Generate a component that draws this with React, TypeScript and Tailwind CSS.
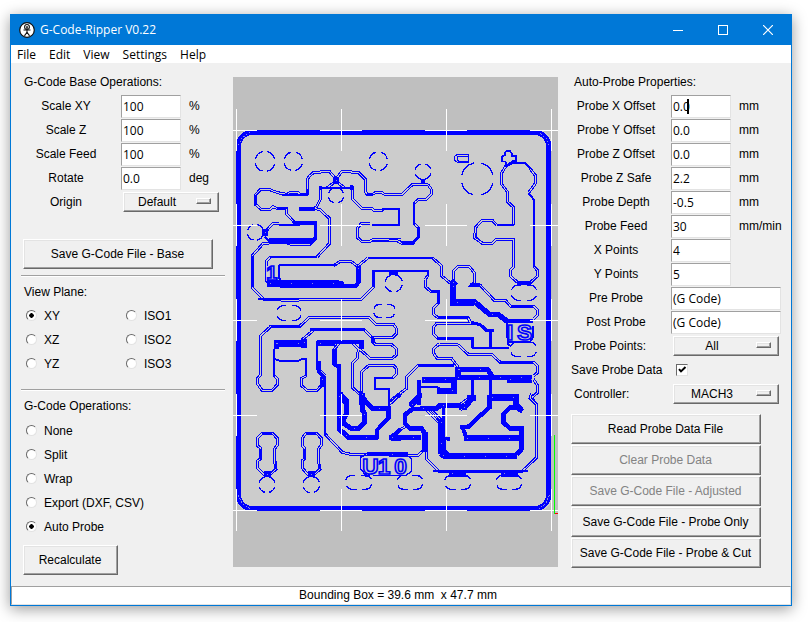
import { useId, type ReactNode } from "react";

type Trace = [width: number, d: string];
type Pad = [cx: number, cy: number, w: number, h: number];
type Tile = { x: number; y: number; pairs: string[]; traces: Trace[]; pads: Pad[] };

/* The board is drawn in six sections. "pairs" are twin isolation passes,
   "traces" are solid cuts with their own width, "pads" are dashed outlines. */
const tiles: Tile[] = [
  {
    x: -9,
    y: -9,
    pairs: [
      "M231 362V318L237 308L251 295H270L275 291H297L318 315L337 291H360L366 295H385L405 315V350L412 362L430 360L438 355H455L462 360H512",
      "M231 362H210L203 355H180L173 361L155 359L125 350L120 346H92L75 364V390L95 407H120L128 398L140 403H170V420L195 447H210",
      "M366 335V373L395 403H425L430 408H457L462 406",
      "M270 335V378L260 398L253 403L270 407L297 432V512",
      "M512 500H425L415 503H397L382 490V462L395 448H420",
      "M105 475L128 449H147",
      "M290 342L318 322L345 342",
    ],
    traces: [
      [6, "M155 362H232V345"], [6, "M412 362H430"],
      [6, "M75 364V392"], [6, "M140 403H172"],
      [6, "M457 406H508V453H425"],
      [6, "M272 342H364"], [10, "M208 405H256"],
      [18, "M309 318H327"], [16, "M97 475H113"],
      [6, "M147 452H210"], [7, "M190 447H256V490L248 498H210"],
      [12, "M118 498H210"], [6, "M105 488L122 508H240L254 498"],
      [6, "M272 335V347"], [7, "M364 333V347"],
    ],
    pads: [[105, 262, 60, 60], [190, 262, 56, 56], [445, 262, 56, 56], [318, 364, 46, 46], [76, 475, 48, 48]],
  },
  {
    x: 471,
    y: -9,
    pairs: [
      "M-2 361H36L68 331H100L115 333L123 345V362L108 377H85L72 388",
      "M-2 495H22L35 506H68L84 490V460L72 448",
      "M350 272L333 300V328L351 352V382L371 400V452",
      "M320 453L306 438H277L257 460V490L277 508H306L320 496H371V512",
      "M420 284L435 303V330L416 356",
    ],
    traces: [
      [6, "M72 385V452"], [6, "M84 460V490L68 507H35"],
      [6, "M-2 405H27V453H-2"],
      [6, "M320 453H372"], [6, "M345 276L360 268H405L422 283"],
      [6, "M415 356L432 378V512"], [9, "M365 264H382"],
      [9, "M92 322H106"],
      [3, "M202 241H236V265H202L193 258V248Z"], [3, "M206 246H236V261H206L201 257V250Z"],
      [5, "M345 236L350 231H360L366 240V246H378V262H364V270L350 277L346 262H335V248L345 243Z"],
    ],
    pads: [[262, 315, 96, 98], [99, 293, 48, 46]],
  },
  {
    x: -9,
    y: 471,
    pairs: [
      "M120 26H170L180 30H240L256 14V-2",
      "M117 28H100L67 65V162L102 196H150L155 199H205L210 196H393L429 160V112",
      "M108 95V82L122 68",
      "M262 68L297 30V-2",
      "M310 95L333 81H362L383 97L413 72",
      "M382 -2V10L395 22H420L430 16H512",
      "M90 425V307L122 278V276H210L238 250H417L437 270H490L500 285V298L487 311H430V325L437 332H485L500 345V362L487 373H420L385 342",
      "M215 318L253 287",
      "M403 287L427 311",
      "M90 425L83 433V450L97 470H125L141 453V433L132 425",
      "M229 425L215 433V455L232 470H260L280 448",
      "M330 325L313 345V380",
      "M365 325L385 345L382 372L367 388V460L388 480L415 512",
      "M393 512V415L418 393H490L500 405V420L488 432",
      "M262 400L285 425",
      "M477 512L512 482",
    ],
    traces: [
      [8, "M147 17H210"], [9, "M118 22H210"], [4, "M240 22L254 8V-2"],
      [6, "M120 68H262"], [6, "M413 72H512"], [6, "M429 160V110H512"],
      [6, "M67 65V160"], [6, "M85 196H205"],
      [5, "M106 88V140L122 152"], [5, "M146 94V130L152 138"], [6, "M146 94H205"], [6, "M205 92H320"],
      [16, "M112 148H322L340 153"], [9, "M150 155H378L388 142"], [12, "M386 95V145"],
      [6, "M122 276H210"], [7, "M240 287H405"],
      [18, "M133 328H230"], [12, "M138 318V345"], [14, "M222 315V342"],
      [6, "M132 345V428"], [6, "M135 375L150 381H205L215 375H229V425"],
      [14, "M278 428V460"], [6, "M262 408V322"], [15, "M262 327H315"], [10, "M315 323H394V345"],
      [8, "M266 382V412L285 432"], [6, "M285 455V512"],
      [10, "M313 345V390L325 398"], [9, "M326 390V512"], [12, "M330 482L350 512"],
      [7, "M428 305V328"], [7, "M393 470V512"],
      [6, "M490 432H435V466H477V512"], [8, "M478 118H505"],
    ],
    pads: [[177, 237, 76, 44], [463, 231, 66, 40], [491, 148, 52, 50]],
  },
  {
    x: 471,
    y: 471,
    pairs: [
      "M128 72L154 95V125L182 148",
      "M114 125L105 137V157L123 173H144V208L130 222V240L144 251H234L243 268H140L130 280V300L142 312H248V341",
      "M190 150V112L205 97H237L252 115V147L245 153H270L312 198H345L362 216H430L443 228V243L430 256",
      "M252 -2V10L277 28H306L320 15H371V98L360 110V125L385 147H420L443 125V110L432 98",
      "M-2 20H22L35 28H68L84 10V-2",
      "M140 330H180L205 333L235 361H305L330 384H430L443 397V415L430 427",
      "M150 328L130 345V357L142 374H185L205 400",
      "M-2 502L48 465V430L85 393H192",
      "M290 405L310 430",
      "M430 435L443 455V475L425 492L440 512",
      "M210 512L245 485",
    ],
    traces: [
      [6, "M-2 72H130"], [6, "M-2 110H114V127"], [6, "M123 173H144V210"],
      [6, "M144 251H234"], [6, "M140 312H248V341H357"],
      [17, "M189 148V206H252"], [12, "M184 140L200 154"],
      [13, "M250 200L278 224L300 242H325L352 262"],
      [9, "M346 261H428"], [6, "M350 265V292L356 335"], [6, "M358 323H420L430 308V275"],
      [7, "M243 265L270 272L290 289H312"], [7, "M301 289V341"],
      [6, "M432 -2V98"], [9, "M380 147H422"], [7, "M240 152H270"],
      [6, "M362 216H430"],
      [6, "M330 385H430"], [6, "M85 393H192"],
      [12, "M200 406H292L308 428"], [14, "M195 430H425"], [18, "M352 436H425"], [15, "M205 398V430"],
      [14, "M95 437H192V470H140"], [9, "M88 437V512"], [5, "M92 458H140L150 464"],
      [8, "M247 435V490"], [8, "M301 435V490"], [16, "M292 492H378V512"],
      [16, "M230 492H257"], [12, "M60 512L90 485"],
    ],
    pads: [[402, 176, 78, 46], [400, 346, 80, 44]],
  },
  {
    x: -9,
    y: 951,
    pairs: [
      "M285 120L337 175L362 181H412",
      "M97 117H127L141 132V155L133 165V200L138 225L120 242H102L83 222V200L91 195V162L83 155V132Z",
      "M229 117H259L273 132V155L265 165V200L270 225L252 242H234L217 222V200L223 195V162L217 155V132Z",
      "M475 75L440 110",
      "M477 32L512 -2",
    ],
    traces: [
      [6, "M285 -2V122"], [6, "M97 117H127"], [6, "M229 117H259"],
      [5, "M91 165V195"], [5, "M223 165V195"], [5, "M138 200V225"], [5, "M268 200V225"],
      [15, "M102 241H122"], [15, "M234 241H254"],
      [12, "M327 -2V105L357 131H445"], [12, "M330 -2L349 20V60L341 75V88L365 104H385L404 85V58L397 48V-2"],
      [12, "M392 5L425 42H475V75"], [9, "M475 72L441 108V135"], [5, "M477 -2V42"],
      [13, "M482 132H512"], [10, "M488 130L512 104"],
      [10, "M410 180H512"], [4, "M392 188V225L406 242"], [12, "M404 241H420"],
      [5, "M392 190L408 180"], [4, "M430 244H500"],
    ],
    pads: [[111, 272, 48, 48], [244, 272, 50, 48], [386, 265, 80, 42]],
  },
  {
    x: 471,
    y: 951,
    pairs: [
      "M425 -2L420 12L440 32V190L397 232H147L108 193V115",
      "M112 50L155 95",
      "M118 42L160 85",
      "M298 40L235 98",
      "M210 50L255 8",
      "M-2 130L45 98",
      "M50 183H85L100 170V130",
    ],
    traces: [
      [15, "M297 10H378V30L392 48"], [10, "M298 5V45"], [10, "M210 98H235L298 40"],
      [9, "M216 96L228 128"], [13, "M222 132H397"],
      [11, "M398 52L385 40H360L340 60V85L360 103H395V165L380 182"],
      [16, "M152 178L165 186H380"], [13, "M153 75V180"], [7, "M162 135V170L175 180"],
      [11, "M100 45H68L45 62V88L60 103H95L104 118V175"],
      [13, "M90 43H140L150 35H205L225 40L252 5"], [8, "M160 40V132L180 136"],
      [12, "M62 38L88 8V-2"], [5, "M-2 25L30 -2"],
      [13, "M-2 130H92"], [12, "M-2 180H55"],
      [6, "M128 232H415"], [14, "M178 239H228"], [14, "M333 239H383"],
      [4, "M50 183L64 195V232L48 244H20"],
    ],
    pads: [[60, 265, 78, 42], [203, 265, 80, 42], [357, 265, 78, 42]],
  },
];

const crossXs = [10, 325, 640, 955];
const crossYs = [160, 445, 730, 1015, 1300];

function Board() {
  return (
    <svg viewBox="0 0 975 1470" className="block w-full bg-[#bfbfbf]" shapeRendering="crispEdges" role="img" aria-label="Tool path preview">
      <rect x="10" y="160" width="945" height="1140" rx="36" fill="#cccccc" />
      <rect x="16.5" y="166.5" width="930" height="1128" rx="40" fill="none" stroke="#0000ff" strokeWidth="16" />
      <g fill="none" stroke="#cccccc" strokeWidth="2" strokeDasharray="5 5">
        <path d="M16 205L26 184L50 166M949 205L939 184L918 166M16 1255L26 1278L50 1295M949 1255L939 1278L918 1295" />
      </g>
      {tiles.map((t, i) => (
        <g key={i} transform={`translate(${t.x} ${t.y})`} fill="none">
          {t.pairs.map((d) => <path key={d} d={d} stroke="#0000ff" strokeWidth="9" />)}
          {t.pairs.map((d) => <path key={d} d={d} stroke="#cccccc" strokeWidth="3" />)}
        </g>
      ))}
      {tiles.map((t, i) => (
        <g key={i} transform={`translate(${t.x} ${t.y})`} fill="none" stroke="#0000ff">
          {t.traces.map(([w, d]) => <path key={d} d={d} strokeWidth={w >= 7 ? w + 3 : w} />)}
          {t.traces.filter(([w]) => w >= 12).map(([, d]) => (
            <path key={d} d={d} stroke="#cccccc" strokeWidth="2" strokeDasharray="3 60" strokeDashoffset="-8" />
          ))}
          {t.pads.map(([cx, cy, w, h]) => (
            <rect
              key={`${cx}-${cy}`}
              x={cx - w / 2}
              y={cy - h / 2}
              width={w}
              height={h}
              rx={w === h || w > 90 ? w / 2 : h / 2}
              strokeWidth="4"
              pathLength={100}
              strokeDasharray="17 8"
              strokeDashoffset={w > h + 20 ? 13 : -4}
            />
          ))}
        </g>
      ))}
      <g fill="#cccccc" stroke="#0000ff" strokeWidth="5" fontFamily="Liberation Sans, sans-serif" fontWeight="700" fontSize="68">
        <text x="100" y="608" fontSize="60">1</text>
        <text x="388 434 484" y="1190">U10</text>
        <text x="822 852" y="790">IS</text>
      </g>
      <g stroke="#ffffff" strokeWidth="3">
        {crossYs.map((y) => crossXs.map((x) => <path key={`${x}-${y}`} d={`M${x - 63} ${y}H${x + 63}M${x} ${y - 63}V${y + 63}`} />))}
      </g>
      <path d="M964 1075V1311" stroke="#00ff00" strokeWidth="3" />
      <path d="M966 1309H975" stroke="#ff0000" strokeWidth="3" />
    </svg>
  );
}

const raised =
  "border border-t-white border-l-white border-r-[#696969] border-b-[#696969] bg-[#f0f0f0] shadow-[inset_-1px_-1px_0_#a0a0a0,inset_1px_1px_0_#e3e3e3]";

function PushButton({ children, className = "w-[190px]", disabled }: { children: ReactNode; className?: string; disabled?: boolean }) {
  return (
    <button type="button" disabled={disabled} className={`block h-[30px] whitespace-nowrap pr-px text-center disabled:text-[#838383] ${raised} ${className}`}>
      {children}
    </button>
  );
}

function Entry({ id, value, wide, caret }: { id: string; value: string; wide?: boolean; caret?: boolean }) {
  return (
    <span className="relative block">
      <input
        id={id}
        defaultValue={value}
        className={`block h-[23px] rounded-none border border-t-[#a0a0a0] border-l-[#a0a0a0] border-r-[#e3e3e3] border-b-[#e3e3e3] bg-white px-px font-['Open_Sans','Noto_Sans',sans-serif] text-[12px] text-black outline-none ${wide ? "w-[110px]" : "w-[60px]"}`}
      />
      {caret && <span className="absolute left-4 top-1 h-[15px] w-0.5 bg-black" />}
    </span>
  );
}

function Field({ label, value, unit, wide, caret }: { label: string; value: string; unit?: string; wide?: boolean; caret?: boolean }) {
  const id = useId();
  return (
    <div className="flex h-6 items-center">
      <label htmlFor={id} className="mr-[13px] w-[84px] whitespace-nowrap text-center">{label}</label>
      <Entry id={id} value={value} wide={wide} caret={caret} />
      {unit && <span className="ml-2 whitespace-nowrap">{unit}</span>}
    </div>
  );
}

function OptionMenu({ id, options, className }: { id: string; options: string[]; className: string }) {
  return (
    <span className={`relative block ${className}`}>
      <select id={id} className={`block h-5 w-full appearance-none rounded-none pr-7 text-center text-black outline-none [text-align-last:center] ${raised}`}>
        {options.map((o) => <option key={o}>{o}</option>)}
      </select>
      <span className={`pointer-events-none absolute right-2 top-[6px] h-[6px] w-[15px] ${raised}`} />
    </span>
  );
}

function Radio({ name, label, checked }: { name: string; label: string; checked?: boolean }) {
  return (
    <label className="flex h-6 items-center gap-[7px] whitespace-nowrap">
      <input
        type="radio"
        name={name}
        defaultChecked={checked}
        className="mb-0.5 size-[11px] shrink-0 appearance-none rounded-full border border-t-[#696969] border-l-[#696969] border-r-[#e3e3e3] border-b-[#e3e3e3] bg-white checked:bg-[radial-gradient(circle,#000_0_2px,#fff_2.5px)]"
      />
      {label}
    </label>
  );
}

function Separator() {
  return <hr className="-mx-0.5 h-0.5 border-0 border-t border-b border-t-[#a0a0a0] border-b-white" />;
}

const menus = ["File", "Edit", "View", "Settings", "Help"];
const operations = ["None", "Split", "Wrap", "Export (DXF, CSV)", "Auto Probe"];

export default function App() {
  return (
    <div className="bg-white pt-[14px] pr-4 pb-4 pl-[10px] font-['Liberation_Sans',Arial,sans-serif] text-[12px] leading-4 text-black">
      <div className="border border-[#0078d7] bg-[#f0f0f0] shadow-[0_3px_14px_rgba(0,0,0,0.4)]">
        <header className="flex h-[30px] items-center bg-[#0078d7] pl-2 font-['Open_Sans','Noto_Sans',sans-serif] text-white">
          <svg viewBox="0 0 16 16" className="mr-[5px] size-4" aria-hidden="true">
            <circle cx="8" cy="8" r="7.3" fill="#fff" stroke="#111" strokeWidth="1.2" />
            <g fill="none" stroke="#111" strokeWidth="1.1">
              <circle cx="8" cy="4.9" r="2.4" />
              <path d="M8 4.2V11M4.5 8H11.5M8 10L6 13.2H5M8 10L10 13.2H11M7 5H9" />
            </g>
          </svg>
          <h1 className="flex-1">G-Code-Ripper V0.22</h1>
          <button type="button" aria-label="Minimize" className="grid h-full w-[45px] place-items-center">
            <svg width="10" height="10" aria-hidden="true"><path d="M0 5.5H10" stroke="#fff" /></svg>
          </button>
          <button type="button" aria-label="Maximize" className="grid h-full w-[45px] place-items-center">
            <svg width="10" height="10" aria-hidden="true"><rect x=".5" y=".5" width="9" height="9" fill="none" stroke="#fff" /></svg>
          </button>
          <button type="button" aria-label="Close" className="grid h-full w-[46px] place-items-center">
            <svg width="10" height="10" aria-hidden="true"><path d="M0 0L10 10M10 0L0 10" stroke="#fff" strokeWidth="1.2" /></svg>
          </button>
        </header>
        <nav className="flex h-[18px] items-center gap-[13px] bg-white pl-[6px] pt-0.5 font-['Open_Sans','Noto_Sans',sans-serif]">
          {menus.map((m) => <button key={m} type="button">{m}</button>)}
        </nav>

        <main className="flex items-start pt-[7px] pb-[11px]">
          <section className="w-[222px] shrink-0 pl-3 pr-[10px]">
            <h2 className="flex h-6 items-center pl-px">G-Code Base Operations:</h2>
            <div className="pl-px">
              <Field label="Scale XY" value="100" unit="%" />
              <Field label="Scale Z" value="100" unit="%" />
              <Field label="Scale Feed" value="100" unit="%" />
              <Field label="Rotate" value="0.0" unit="deg" />
              <div className="flex h-6 items-center">
                <label htmlFor="origin" className="mr-[15px] w-[84px] text-center">Origin</label>
                <OptionMenu id="origin" className="w-24" options={["Default", "Top-Left", "Center", "Bottom-Right"]} />
              </div>
            </div>
            <div className="pt-[25px] pb-[6px]"><PushButton>Save G-Code File - Base</PushButton></div>
            <Separator />
            <fieldset className="pt-[3px] pb-[13px]">
              <legend className="float-left flex h-6 w-full items-center pl-px">View Plane:</legend>
              <div className="clear-both grid grid-flow-col grid-cols-[100px_1fr] grid-rows-3 pl-[3px]">
                <Radio name="plane" label="XY" checked />
                <Radio name="plane" label="XZ" />
                <Radio name="plane" label="YZ" />
                <Radio name="plane" label="ISO1" />
                <Radio name="plane" label="ISO2" />
                <Radio name="plane" label="ISO3" />
              </div>
            </fieldset>
            <Separator />
            <fieldset className="pt-[3px]">
              <legend className="float-left flex h-6 w-full items-center pl-px">G-Code Operations:</legend>
              <div className="clear-both pt-px pl-[3px]">
                {operations.map((o) => <Radio key={o} name="operation" label={o} checked={o === "Auto Probe"} />)}
              </div>
            </fieldset>
            <div className="pt-[6px]"><PushButton className="w-[95px]">Recalculate</PushButton></div>
          </section>

          <div className="min-w-0 flex-1 pt-[7px]"><Board /></div>

          <section className="w-[233px] shrink-0 pl-[13px]">
            <h2 className="flex h-6 items-center pl-[3px]">Auto-Probe Properties:</h2>
            <div className="pl-[3px]">
              <Field label="Probe X Offset" value="0.0" unit="mm" caret />
              <Field label="Probe Y Offset" value="0.0" unit="mm" />
              <Field label="Probe Z Offset" value="0.0" unit="mm" />
              <Field label="Probe Z Safe" value="2.2" unit="mm" />
              <Field label="Probe Depth" value="-0.5" unit="mm" />
              <Field label="Probe Feed" value="30" unit="mm/min" />
              <Field label="X Points" value="4" />
              <Field label="Y Points" value="5" />
              <Field label="Pre Probe" value="(G Code)" wide />
              <Field label="Post Probe" value="(G Code)" wide />
            </div>
            <div className="flex h-6 items-center">
              <label htmlFor="points" className="w-[102px] pl-[3px]">Probe Points:</label>
              <OptionMenu id="points" className="w-[106px]" options={["All", "Only"]} />
            </div>
            <div className="flex h-6 items-center">
              <label htmlFor="save-data" className="w-[105px] whitespace-nowrap">Save Probe Data</label>
              <span className="relative block size-3">
                <input
                  id="save-data"
                  type="checkbox"
                  defaultChecked
                  className="peer block size-3 appearance-none border border-t-[#696969] border-l-[#696969] border-r-[#e3e3e3] border-b-[#e3e3e3] bg-white"
                />
                <svg viewBox="0 0 12 12" className="pointer-events-none absolute inset-0 hidden peer-checked:block" aria-hidden="true">
                  <path d="M3 5.2L5 7.4L9.5 3" fill="none" stroke="#000" strokeWidth="2" />
                </svg>
              </span>
            </div>
            <div className="flex h-6 items-center">
              <label htmlFor="controller" className="w-[102px] pl-[3px]">Controller:</label>
              <OptionMenu id="controller" className="w-[106px]" options={["MACH3", "LinuxCNC"]} />
            </div>
            <div className="flex flex-col gap-px pt-2">
              <PushButton>Read Probe Data File</PushButton>
              <PushButton disabled>Clear Probe Data</PushButton>
              <PushButton disabled>Save G-Code File - Adjusted</PushButton>
              <PushButton>Save G-Code File - Probe Only</PushButton>
              <PushButton>Save G-Code File - Probe &amp; Cut</PushButton>
            </div>
          </section>
        </main>

        <footer className="h-[19px] whitespace-pre border border-t-[#a0a0a0] border-l-[#a0a0a0] border-r-[#e3e3e3] border-b-[#e3e3e3] bg-white pr-[6px] text-center">
          {"Bounding Box = 39.6 mm  x 47.7 mm"}
        </footer>
      </div>
    </div>
  );
}
